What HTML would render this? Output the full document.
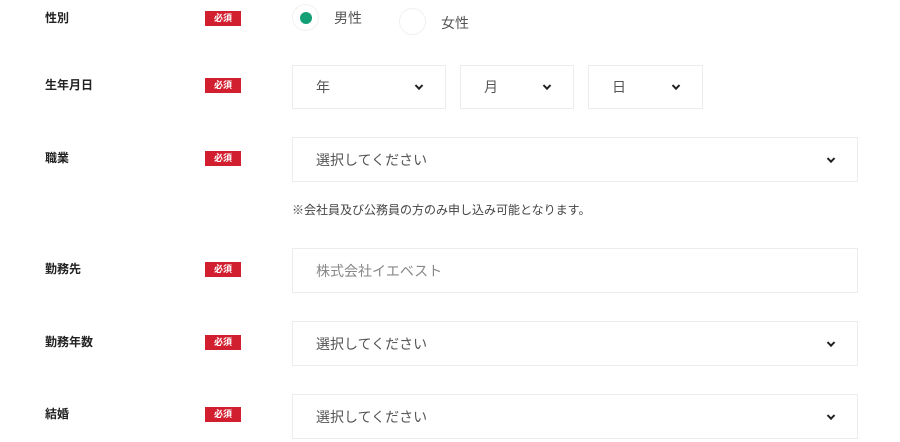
<!DOCTYPE html>
<html><head><meta charset="utf-8"><style>
body{margin:0;width:900px;height:442px;background:#fff;position:relative;overflow:hidden;font-family:"Liberation Sans","Noto Sans CJK JP",sans-serif;}
.a{position:absolute}
.lbl{left:45px;font-size:12px;font-weight:bold;color:#222;line-height:14px}
.req{left:205px;width:36px;height:15px;background:#d21f2f;color:#fff;font-size:9px;font-weight:bold;line-height:15px;text-align:center}
.box{border:1px solid #ececec;box-sizing:border-box;font-size:14px;color:#555;display:flex;align-items:center;padding-left:23px}
.chev{position:absolute;right:23px;top:50%;width:4px;height:4px;border-right:2px solid #222;border-bottom:2px solid #222;transform:translateY(-70%) rotate(45deg)}
.ph{color:#888}
.rad{width:27px;height:27px;border-radius:50%;border:1px solid #f0f0f0;box-sizing:border-box}
</style></head><body>
<div class="a lbl" style="top:11px">性別</div><div class="a req" style="top:11px">必須</div>
<div class="a rad" style="left:292px;top:4px"><div style="position:absolute;left:7px;top:7px;width:12px;height:12px;border-radius:50%;background:#14a077"></div></div>
<div class="a" style="left:334px;top:8px;font-size:14px;color:#555">男性</div>
<div class="a rad" style="left:399px;top:8px"></div>
<div class="a" style="left:441px;top:13px;font-size:14px;color:#555">女性</div>

<div class="a lbl" style="top:78px">生年月日</div><div class="a req" style="top:78px">必須</div>
<div class="a box" style="left:292px;top:65px;width:154px;height:44px">年<span class="chev"></span></div>
<div class="a box" style="left:460px;top:65px;width:114px;height:44px">月<span class="chev"></span></div>
<div class="a box" style="left:588px;top:65px;width:115px;height:44px">日<span class="chev"></span></div>

<div class="a lbl" style="top:151px">職業</div><div class="a req" style="top:151px">必須</div>
<div class="a box" style="left:292px;top:137px;width:566px;height:45px">選択してください<span class="chev"></span></div>
<div class="a" style="left:292px;top:201px;font-size:12px;color:#444">※会社員及び公務員の方のみ申し込み可能となります。</div>

<div class="a lbl" style="top:262px">勤務先</div><div class="a req" style="top:262px">必須</div>
<div class="a box ph" style="left:292px;top:248px;width:566px;height:45px">株式会社イエベスト</div>

<div class="a lbl" style="top:335px">勤務年数</div><div class="a req" style="top:335px">必須</div>
<div class="a box" style="left:292px;top:321px;width:566px;height:45px">選択してください<span class="chev"></span></div>

<div class="a lbl" style="top:407px">結婚</div><div class="a req" style="top:407px">必須</div>
<div class="a box" style="left:292px;top:394px;width:566px;height:45px">選択してください<span class="chev"></span></div>
</body></html>
